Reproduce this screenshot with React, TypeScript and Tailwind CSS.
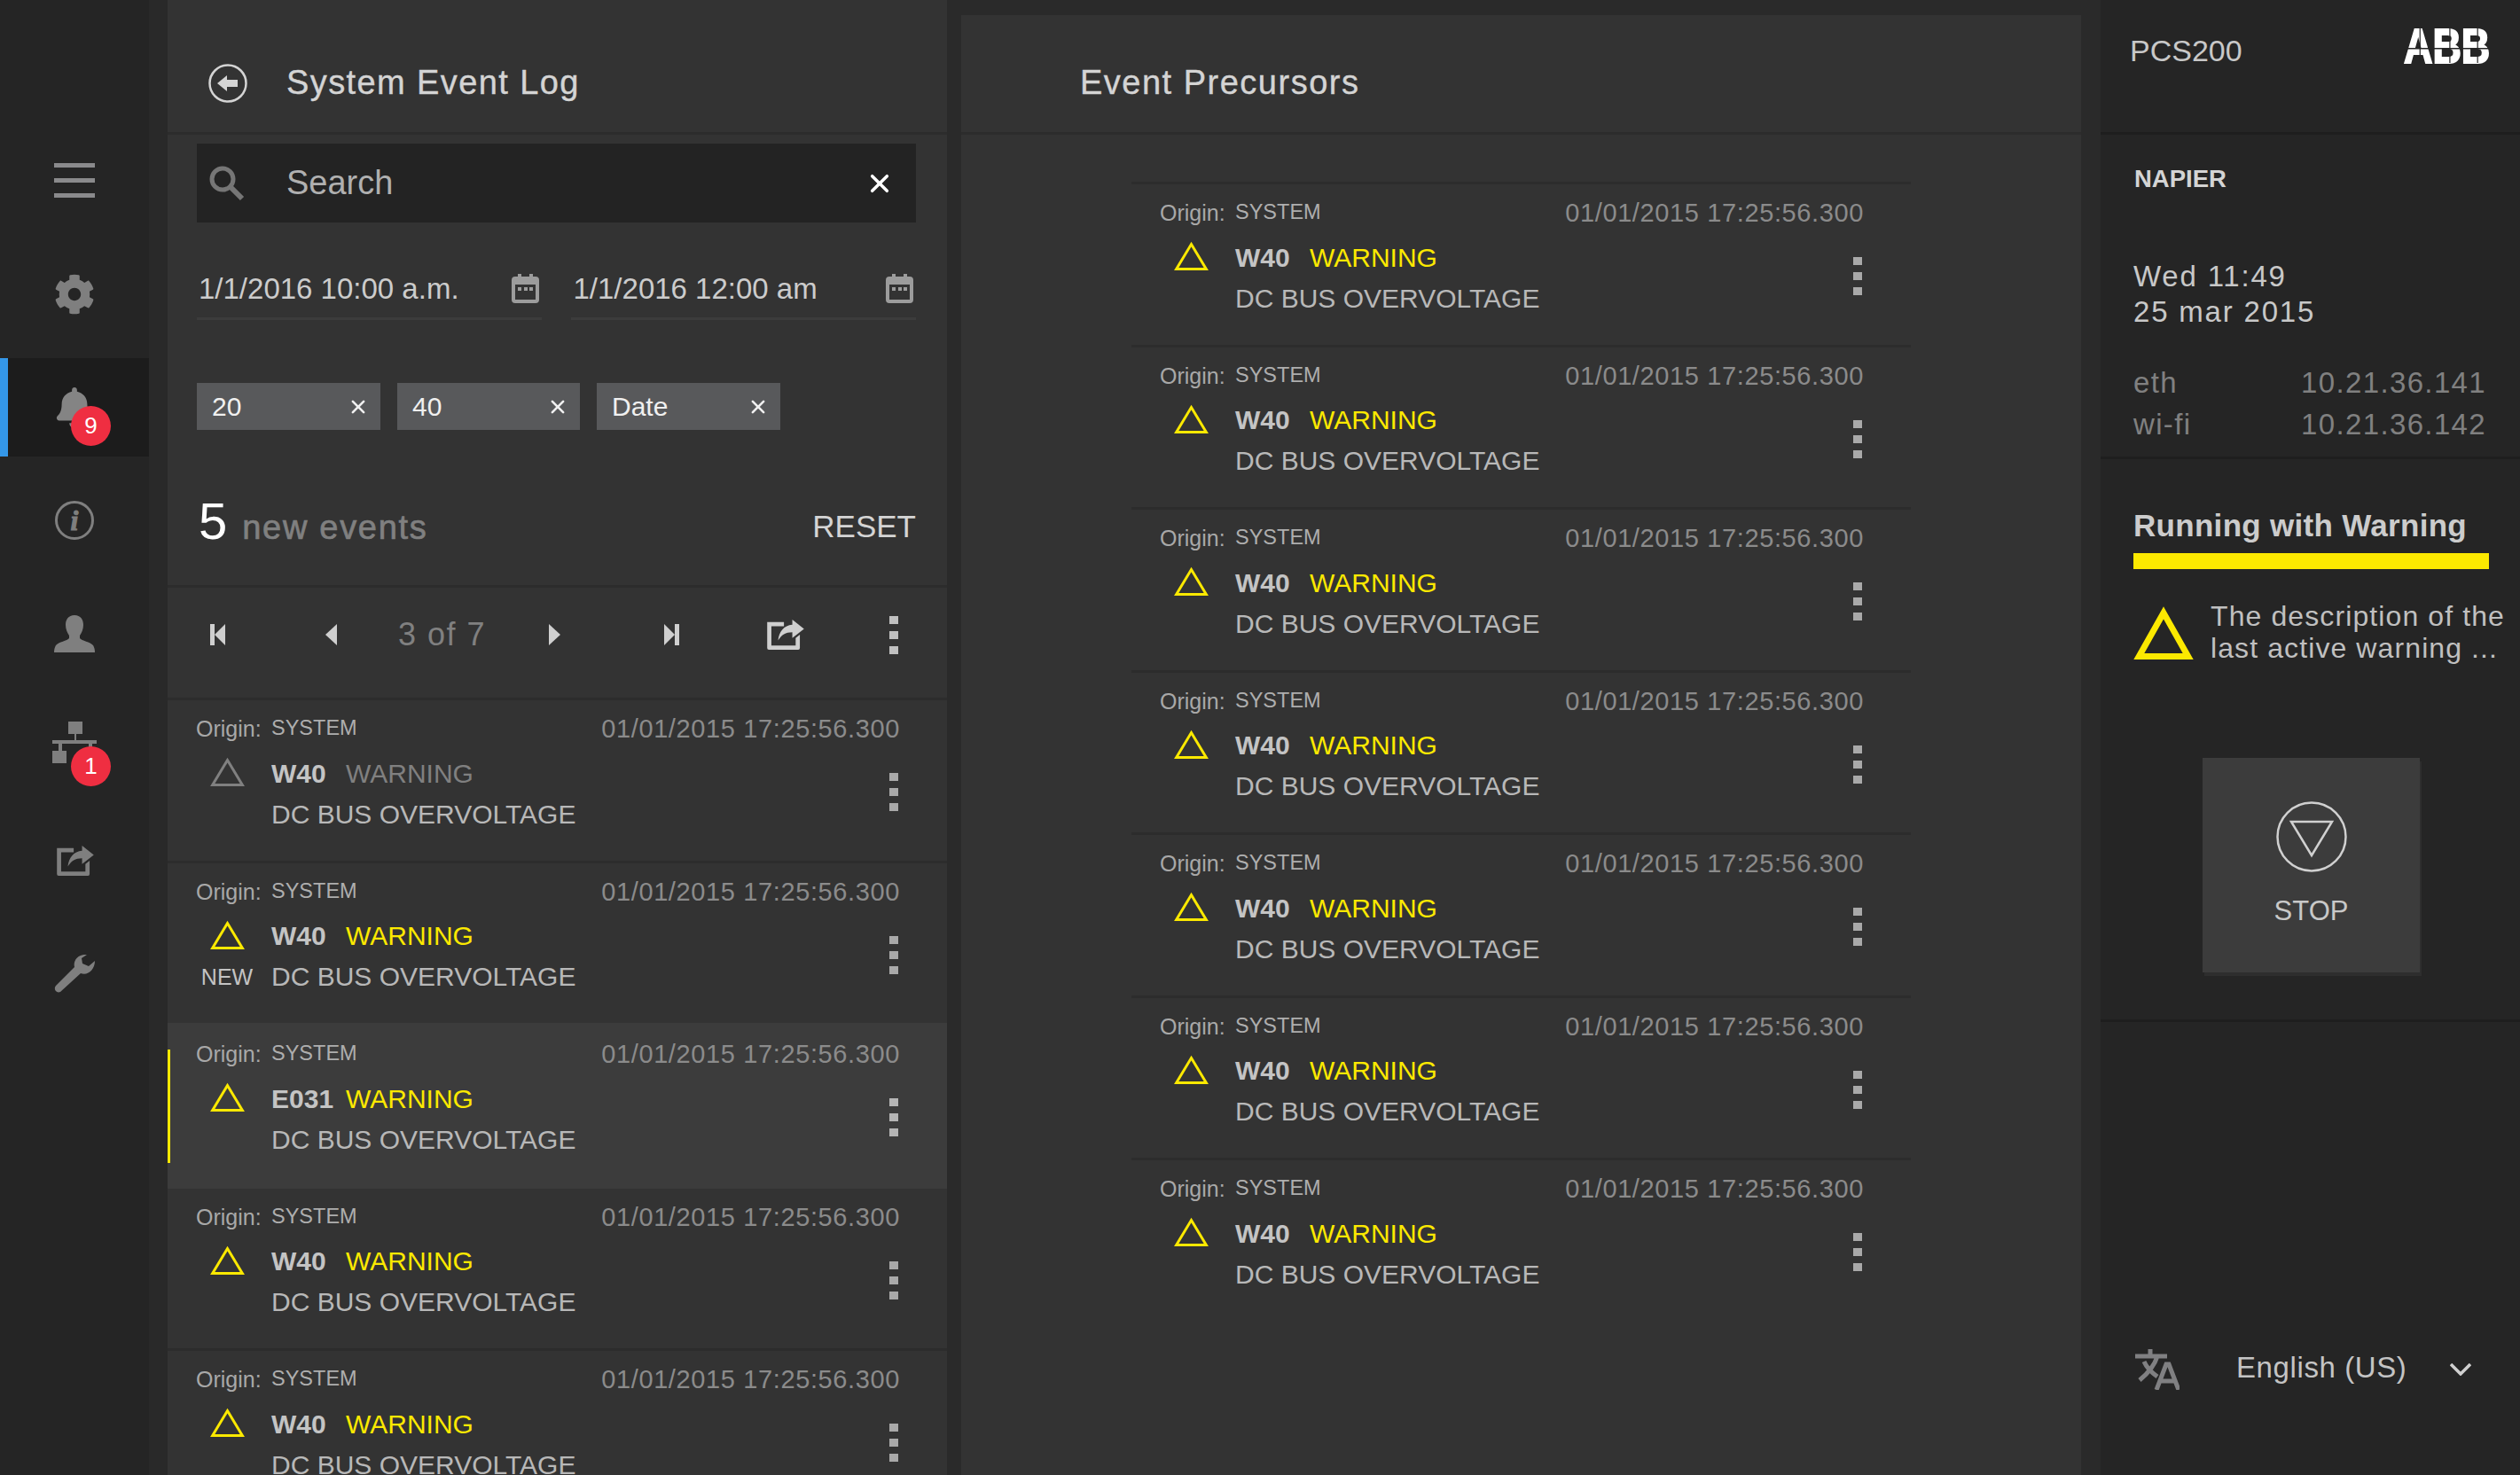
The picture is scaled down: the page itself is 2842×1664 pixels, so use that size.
import React from "react";
import { FaBell, FaCog } from "react-icons/fa";
import { IoClose } from "react-icons/io5";

function Triangle({ className = "", w = 39, h = 33, sw = 3 }: { className?: string; w?: number; h?: number; sw?: number }) {
	return (
		<svg width={w} height={h} viewBox={`0 0 ${w} ${h}`} className={className}>
			<polygon
				points={`${w / 2},${sw * 1.2} ${w - sw * 0.9},${h - sw / 2} ${sw * 0.9},${h - sw / 2}`}
				fill="none"
				stroke="currentColor"
				strokeWidth={sw}
			/>
		</svg>
	);
}

function Kebab({ className = "" }: { className?: string }) {
	return (
		<div className={`flex flex-col gap-[8px] ${className}`}>
			<div className="w-[10px] h-[9px] bg-current" />
			<div className="w-[10px] h-[9px] bg-current" />
			<div className="w-[10px] h-[9px] bg-current" />
		</div>
	);
}

function ShareIcon({ className = "" }: { className?: string }) {
	return (
		<svg viewBox="0 0 44 36" className={className} fill="currentColor">
			<path d="M0 3h20v5H5v23h29v-9l5-4v16a2 2 0 0 1-2 2H2a2 2 0 0 1-2-2V3z" />
			<path d="M30 0l14 11-14 11v-7c-8 0-13 3-17 10 1-11 7-18 17-19V0z" />
		</svg>
	);
}

function CalendarIcon() {
	return (
		<svg viewBox="0 0 31 33" className="w-[31px] h-[33px] text-[#9c9c9c] shrink-0">
			<rect x="7" y="0" width="4" height="6" fill="currentColor" />
			<rect x="20" y="0" width="4" height="6" fill="currentColor" />
			<path d="M4 3h23a4 4 0 0 1 4 4v22a4 4 0 0 1-4 4H4a4 4 0 0 1-4-4V7a4 4 0 0 1 4-4zm0 9v17h23V12H4z" fill="currentColor" fillRule="evenodd" />
			<rect x="7" y="15" width="4" height="4" fill="currentColor" />
			<rect x="14" y="15" width="4" height="4" fill="currentColor" />
			<rect x="20" y="15" width="4" height="4" fill="currentColor" />
		</svg>
	);
}

function Badge({ n, className = "" }: { n: string; className?: string }) {
	return (
		<div className={`absolute w-[45px] h-[45px] rounded-full bg-[#ef2e41] text-white text-[26px] flex items-center justify-center ${className}`}>
			{n}
		</div>
	);
}

function Sidebar() {
	return (
		<div className="w-[168px] h-full bg-[#252525] text-[#7f7f7f] flex flex-col shrink-0">
			<div className="h-[404px] flex flex-col items-center">
				<div className="mt-[184px] w-[46px] flex flex-col gap-[12px]">
					<div className="h-[5px] bg-[#8a8a8c]" />
					<div className="h-[5px] bg-[#8a8a8c]" />
					<div className="h-[5px] bg-[#8a8a8c]" />
				</div>
				<FaCog className="mt-[86px] w-[46px] h-[46px]" />
			</div>
			<div className="h-[111px] bg-[#1c1c1c] border-l-[9px] border-[#3497e8] relative flex items-center justify-center pr-[9px]">
				<FaBell className="w-[42px] h-[46px] text-[#848484]" />
				<Badge n="9" className="left-[71px] top-[54px]" />
			</div>
			<div className="flex flex-col items-center relative flex-1">
				<svg viewBox="0 0 44 44" className="w-[44px] h-[44px] mt-[50px]">
					<circle cx="22" cy="22" r="20.5" fill="none" stroke="#7f7f7f" strokeWidth="3" />
					<text x="22" y="33" textAnchor="middle" fontFamily="'Liberation Serif', serif" fontStyle="italic" fontWeight="700" fontSize="32" fill="#7f7f7f" stroke="#7f7f7f" strokeWidth="1">i</text>
				</svg>
				<svg viewBox="0 0 46 42" className="w-[46px] h-[42px] mt-[85px]" fill="currentColor">
					<path d="M23 0c7 0 10 5 10 11 0 5-2 9-4 12v3c2 3 12 4 15 8 1 2 2 4 2 8H0c0-4 1-6 2-8 3-4 13-5 15-8v-3c-2-3-4-7-4-12C13 5 16 0 23 0z" />
				</svg>
				<svg viewBox="0 0 50 47" className="w-[50px] h-[47px] mt-[78px]" fill="currentColor">
					<rect x="18" y="0" width="16" height="14" />
					<rect x="25" y="14" width="2" height="7" />
					<rect x="0" y="21" width="50" height="4" />
					<rect x="7" y="25" width="4" height="8" />
					<rect x="41" y="25" width="4" height="8" />
					<rect x="0" y="33" width="16" height="14" />
				</svg>
				<Badge n="1" className="left-[80px] top-[327px]" />
				<ShareIcon className="w-[44px] h-[34px] mt-[93px] ml-[1px]" />
				<svg viewBox="0 0 46 44" className="w-[46px] h-[44px] mt-[89px]" fill="currentColor">
					<path d="M37 0C28-1 21 6 23 14L2 35c-3 3 0 9 5 7l23-21c8 3 16-4 16-14l-7 6-7-3-1-6z" />
				</svg>
			</div>
		</div>
	);
}

function EventRow({ code = "W40", inactive, isNew, active, noLine }: { code?: string; inactive?: boolean; isNew?: boolean; active?: boolean; noLine?: boolean }) {
	const tone = inactive ? "text-[#808080]" : "text-[#fce900]";
	return (
		<div className={`relative h-[183.5px] shrink-0 border-t-[3px] pl-[32px] pr-[53px] ${active ? "bg-[#3c3c3c] border-[#3c3c3c]" : noLine ? "border-[#3c3c3c]" : "border-[#2c2c2c]"}`}>
			{active && <div className="absolute left-0 top-[27px] w-[3px] h-[128px] bg-[#fce900]" />}
			<div className="flex items-center justify-between h-[34px] mt-[16px] text-[#aeaeae] text-[23.5px]">
				<div className="flex">
					<span className="w-[85px] text-[#a8a8a8] text-[25px]">Origin:</span>
					<span>SYSTEM</span>
				</div>
				<span className="text-[#8b8b8b] text-[29px] tracking-[0.62px]">01/01/2015 17:25:56.300</span>
			</div>
			<div className="flex mt-[9px]">
				<div className="w-[70px] flex flex-col items-center shrink-0">
					<Triangle className={`mt-[5px] ${tone}`} />
					{isNew && <span className="mt-[16px] text-[25px] leading-[30px] text-[#c4c4c4]">NEW</span>}
				</div>
				<div className="ml-[15px] flex-1">
					<div className="h-[46px] flex items-center">
						<span className="w-[84px] text-[30px] font-bold text-[#c4c4c4]">{code}</span>
						<span className={`text-[30px] ${tone}`}>WARNING</span>
					</div>
					<div className="h-[46px] flex items-center text-[30px] text-[#b8b8b8]">DC BUS OVERVOLTAGE</div>
				</div>
				<Kebab className={`mr-[2px] mt-[23px] ${active ? "text-[#b5b5b5]" : "text-[#a9a9a9]"}`} />
			</div>
		</div>
	);
}

function Chip({ label, w }: { label: string; w: string }) {
	return (
		<div className={`${w} h-[53px] bg-[#58595b] flex items-center justify-between pl-[17px] pr-[11px] text-[#f0f0f0] text-[30px]`}>
			<span>{label}</span>
			<IoClose className="w-[28px] h-[28px]" />
		</div>
	);
}

function EventLog() {
	return (
		<div className="w-[879px] h-full bg-[#333333] flex flex-col shrink-0 overflow-hidden">
			<div className="h-[152px] shrink-0 border-b-[3px] border-[#2c2c2c] flex items-center pl-[46px] pt-[38px]">
				<svg viewBox="0 0 44 44" className="w-[44px] h-[44px] text-[#d4d4d4]">
					<circle cx="22" cy="22" r="20.5" fill="none" stroke="currentColor" strokeWidth="2.5" />
					<path d="M10 22l11-9v5h12v8H21v5z" fill="currentColor" />
				</svg>
				<h1 className="ml-[44px] text-[38px] text-[#d4d4d4] tracking-[1.4px] [-webkit-text-stroke:0.4px_#d4d4d4]">System Event Log</h1>
			</div>
			<div className="pl-[33px] pr-[35px] shrink-0">
				<div className="mt-[10px] h-[89px] bg-[#232323] flex items-center pl-[14px] pr-[22px]">
					<svg viewBox="0 0 40 40" className="w-[40px] h-[40px] text-[#767676]">
						<circle cx="15" cy="15" r="12" fill="none" stroke="currentColor" strokeWidth="5" />
						<path d="M23 23l14 14" stroke="currentColor" strokeWidth="6" />
					</svg>
					<span className="ml-[47px] flex-1 text-[38px] text-[#b0b0b0]">Search</span>
					<IoClose className="w-[38px] h-[38px] text-white" />
				</div>
				<div className="mt-[42px] flex gap-[33px] h-[68px]">
					<div className="w-[390px] border-b-[3px] border-[#3c3c3c] flex items-center justify-between pr-[3px] pl-[2px] text-[33px] text-[#cccccc]">
						<span>1/1/2016 10:00 a.m.</span>
						<CalendarIcon />
					</div>
					<div className="w-[391px] border-b-[3px] border-[#3c3c3c] flex items-center justify-between pr-[3px] pl-[3px] text-[33px] text-[#cccccc]">
						<span>1/1/2016 12:00 am</span>
						<CalendarIcon />
					</div>
				</div>
				<div className="mt-[71px] flex gap-[19px]">
					<Chip label="20" w="w-[207px]" />
					<Chip label="40" w="w-[206px]" />
					<Chip label="Date" w="w-[207px]" />
				</div>
				<div className="h-[175px] flex items-center justify-between pt-[37px]">
					<div className="flex items-baseline pl-[2px]">
						<span className="text-[58px] leading-none text-white">5</span>
						<span className="ml-[17px] text-[38px] text-[#808080] tracking-[1.7px] [-webkit-text-stroke:0.7px_#808080]">new events</span>
					</div>
					<span className="mt-[6px] text-[35px] text-[#d4d4d4]">RESET</span>
				</div>
			</div>
			<div className="h-[127px] shrink-0 border-t-[3px] border-[#2c2c2c] relative flex items-center text-[#cfcfcf] pb-[18px]">
				<svg viewBox="0 0 17 24" className="w-[17px] h-[24px] ml-[48px]" fill="currentColor">
					<rect x="0" y="0" width="5" height="24" />
					<path d="M17 0v24L5 12z" />
				</svg>
				<svg viewBox="0 0 13 24" className="w-[13px] h-[24px] ml-[113px]" fill="currentColor">
					<path d="M13 0v24L0 12z" />
				</svg>
				<span className="ml-[69px] w-[99px] text-[36px] text-[#808080] tracking-[1.5px] whitespace-nowrap">3 of 7</span>
				<svg viewBox="0 0 13 24" className="w-[13px] h-[24px] ml-[71px]" fill="currentColor">
					<path d="M0 0v24l13-12z" />
				</svg>
				<svg viewBox="0 0 17 24" className="w-[17px] h-[24px] ml-[117px]" fill="currentColor">
					<rect x="12" y="0" width="5" height="24" />
					<path d="M0 0v24l12-12z" />
				</svg>
				<ShareIcon className="w-[44px] h-[34px] ml-[98px]" />
				<Kebab className="ml-[95px] text-[#c0c0c0]" />
			</div>
			<EventRow inactive />
			<EventRow isNew />
			<EventRow code="E031" active />
			<EventRow noLine />
			<EventRow />
		</div>
	);
}

function Precursors() {
	return (
		<div className="w-[1263px] mt-[17px] bg-[#333333] flex flex-col shrink-0">
			<div className="h-[135px] shrink-0 border-b-[3px] border-[#2c2c2c] flex items-center pl-[134px] pt-[20px]">
				<h2 className="text-[38px] text-[#d4d4d4] tracking-[1.5px] [-webkit-text-stroke:0.4px_#d4d4d4]">Event Precursors</h2>
			</div>
			<div className="ml-[192px] w-[879px] mt-[53px] flex flex-col">
				{[0, 1, 2, 3, 4, 5, 6].map((i) => (
					<EventRow key={i} />
				))}
			</div>
		</div>
	);
}

function StatusPanel() {
	return (
		<div className="w-[473px] h-full bg-[#252525] flex flex-col shrink-0">
			<div className="h-[152px] shrink-0 border-b-[3px] border-[#1e1e1e] flex pl-[33px] pr-[34px] justify-between">
				<span className="mt-[34px] h-[46px] leading-[46px] text-[34px] text-[#c8c8c8]">PCS200</span>
				<svg width="97" height="40" viewBox="0 0 121 40" preserveAspectRatio="none" className="mt-[31px] overflow-visible">
					<text x="0" y="40" fontFamily="'Liberation Sans', sans-serif" fontWeight="700" fontSize="56" fill="#ffffff" stroke="#ffffff" strokeWidth="2">ABB</text>
					<rect x="0" y="23" width="121" height="1.5" fill="#252525" />
					<rect x="22" y="0" width="1.5" height="40" fill="#252525" />
					<rect x="64" y="0" width="1.5" height="40" fill="#252525" />
					<rect x="103" y="0" width="1.5" height="40" fill="#252525" />
				</svg>
			</div>
			<div className="h-[366px] shrink-0 border-b-[3px] border-[#1e1e1e] pl-[37px] pr-[38px]">
				<div className="mt-[32px] h-[36px] leading-[36px] pl-[1px] text-[27.5px] font-bold text-[#d4d4d4]">NAPIER</div>
				<div className="mt-[72px] text-[33px] leading-[40px] text-[#c8c8c8] tracking-[1.8px]">
					<div>Wed 11:49</div>
					<div>25 mar 2015</div>
				</div>
				<div className="mt-[36px] text-[33px] leading-[47px] text-[#808080] tracking-[1.35px]">
					<div className="flex">
						<span className="w-[190px]">eth</span>
						<span>10.21.36.141</span>
					</div>
					<div className="flex">
						<span className="w-[190px]">wi-fi</span>
						<span>10.21.36.142</span>
					</div>
				</div>
			</div>
			<div className="h-[635px] shrink-0 border-b-[3px] border-[#1e1e1e] pl-[37px]">
				<div className="mt-[51px] h-[48px] leading-[48px] text-[35px] font-bold text-[#cccccc] tracking-[0.3px]">Running with Warning</div>
				<div className="mt-[7px] w-[401px] h-[18px] bg-[#fce900]" />
				<div className="mt-[41px] flex">
					<Triangle w={68} h={61} sw={7} className="text-[#fce900] shrink-0" />
					<div className="ml-[19px] -mt-[6px] text-[32px] leading-[36px] text-[#c0c0c0] tracking-[1.1px] whitespace-nowrap">
						<div>The description of the</div>
						<div>last active warning ...</div>
					</div>
				</div>
				<div className="mt-[106px] ml-[78px] w-[245px] h-[242px] bg-[#3c3c3c] shadow-[2px_4px_0_#2e2e2e] flex flex-col items-center">
					<svg viewBox="0 0 80 80" className="w-[80px] h-[80px] mt-[49px] text-[#d0d0d0]" fill="none" stroke="currentColor" strokeWidth="2.5">
						<circle cx="40" cy="40" r="38.5" />
						<path d="M17 23h46L40 61z" />
					</svg>
					<span className="mt-[22px] text-[31px] leading-[44px] text-[#c8c8c8]">STOP</span>
				</div>
			</div>
			<div className="flex items-center pl-[39px] mt-[369px]">
				<svg viewBox="0 0 50 46" className="w-[50px] h-[46px] text-[#808082] shrink-0" fill="none" stroke="currentColor" strokeWidth="5">
					<path d="M0 8h36M17 0v8M25 8C22 18 16 26 5 35M10 14c3 7 8 12 15 17M24 46l11-29h3l11 29M28 36h18" />
				</svg>
				<span className="ml-[64px] -mt-[4px] w-[241px] text-[33px] text-[#c4c4c4] tracking-[0.6px]">English (US)</span>
				<svg viewBox="0 0 24 14" className="w-[24px] h-[14px] text-[#d0d0d0]" fill="none" stroke="currentColor" strokeWidth="3.5">
					<path d="M1 1l11 11L23 1" />
				</svg>
			</div>
		</div>
	);
}

export default function App() {
	return (
		<div className="w-[2842px] h-[1664px] overflow-hidden flex bg-[#2a2a2a] font-['Liberation_Sans',sans-serif]">
			<Sidebar />
			<div className="w-[21px] shrink-0 bg-[#292929]" />
			<EventLog />
			<div className="w-[16px] shrink-0" />
			<Precursors />
			<div className="w-[22px] shrink-0" />
			<StatusPanel />
		</div>
	);
}
